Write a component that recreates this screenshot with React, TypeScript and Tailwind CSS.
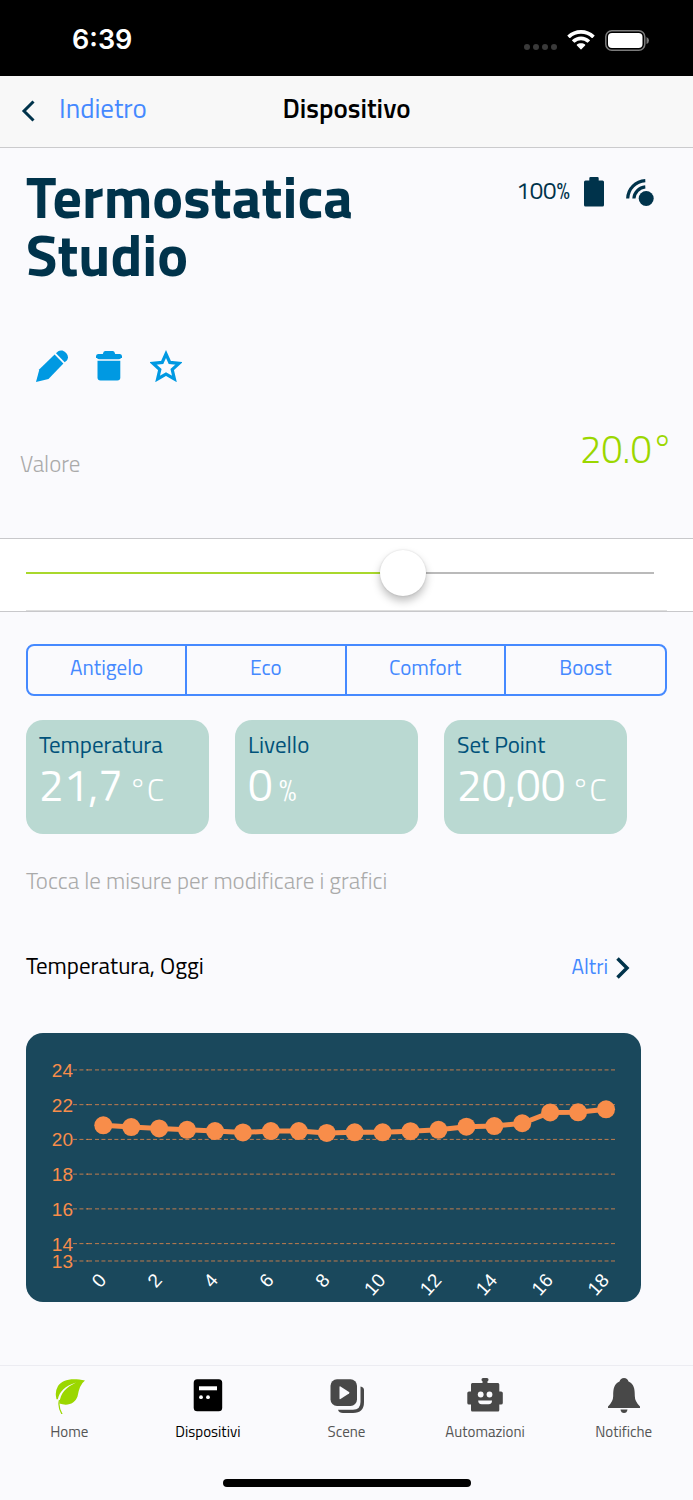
import React, { useState } from 'react';

interface Measure {
  label: string;
  value: string;
  unit: string;
}

interface Tab {
  label: string;
  color: string;
  Icon: React.FC;
}

const presets = ['Antigelo', 'Eco', 'Comfort', 'Boost'];

const measures: Measure[] = [
  { label: 'Temperatura', value: '21,7', unit: '°C' },
  { label: 'Livello', value: '0', unit: '%' },
  { label: 'Set Point', value: '20,00', unit: '°C' },
];

const readings = [
  20.81, 20.71, 20.63, 20.55, 20.48, 20.4, 20.48, 20.48, 20.37, 20.41,
  20.41, 20.47, 20.55, 20.73, 20.77, 20.93, 21.55, 21.56, 21.73,
];

const ticks = [24, 22, 20, 18, 16, 14, 13];

const WifiIcon = () => (
  <svg className="w-7 h-5" viewBox="0 0 28 20" fill="#fff" aria-hidden="true">
    <path d="M14 0C8.800 0 4.100 2 .6 5.200Q.2 5.700.6 6.100L2.400 7.900Q2.800 8.200 3.200 7.900A16 16 0 0 1 24.800 7.900Q25.200 8.200 25.600 7.900L27.400 6.100Q27.800 5.700 27.400 5.200C23.900 2 19.200 0 14 0Z" />
    <path d="M14 6.500C10.700 6.500 7.600 7.800 5.200 9.900Q4.800 10.300 5.200 10.700L7.100 12.500Q7.500 12.800 7.900 12.500A9.500 9.500 0 0 1 20.100 12.500Q20.500 12.800 20.900 12.500L22.800 10.700Q23.200 10.300 22.800 9.900C20.400 7.800 17.300 6.500 14 6.500Z" />
    <path d="M14 13.200C12.400 13.200 11 13.700 9.900 14.600Q9.500 15 9.900 15.400L13.600 19.200Q14 19.600 14.400 19.200L18.100 15.400Q18.500 15 18.100 14.600C17 13.700 15.600 13.200 14 13.200Z" />
  </svg>
);

const PhoneBatteryIcon = () => (
  <svg className="w-11 h-[21px]" viewBox="0 0 44 21" aria-hidden="true">
    <rect x=".8" y=".8" width="39" height="19.400" rx="6" fill="none" stroke="#7b7b7b" strokeWidth="1.500" />
    <rect x="3" y="3" width="34.500" height="15" rx="4" fill="#fff" />
    <path d="M41.500 7Q44 8 44 10.500T41.500 14Z" fill="#7b7b7b" />
  </svg>
);

const BatteryIcon = () => (
  <svg className="w-5 h-[30px]" viewBox="0 0 20 30" fill="#00334b" aria-hidden="true">
    <path d="M6.500 0H13.500Q14.700 0 14.700 1.200V3.400H18.500Q20 3.400 20 4.900V28Q20 29.500 18.500 29.500H1.500Q0 29.500 0 28V4.900Q0 3.400 1.500 3.400H5.300V1.200Q5.300 0 6.500 0Z" />
  </svg>
);

const SignalIcon = () => (
  <svg className="w-7 h-7" viewBox="0 0 28 28" fill="none" stroke="#00334b" strokeWidth="3.200" aria-hidden="true">
    <path d="M1.700 20.500A18.500 18.500 0 0 1 19.300 2.600" />
    <path d="M7.900 20.500A12.500 12.500 0 0 1 19.300 8.900" />
    <circle cx="20.200" cy="20.500" r="7.500" fill="#00334b" stroke="none" />
  </svg>
);

const PencilIcon = () => (
  <svg className="w-8 h-8" viewBox="0 0 32 32" fill="#0099e2" aria-hidden="true">
    <path d="M0 32L3.400 19.300L18.600 4.500L27.400 13.400L12.500 29Z" />
    <path d="M20 3.200L22.200 1.300Q24 0 26.500.6Q31.500 3 32 7.200Q31.800 9.500 30.700 10.500L28.700 12.300Z" />
  </svg>
);

const TrashIcon = () => (
  <svg className="w-[26px] h-[30px]" viewBox="0 0 26 30" fill="#0099e2" aria-hidden="true">
    <path d="M9 0H17Q18.500 0 19.200 2.900H24Q26 3.200 26 5.200V7H25Q24.500 8.300 22.500 8.300H3.500Q1.500 8.300 1 7H0V5.200Q0 3.200 2 2.900H6.800Q7.500 0 9 0Z" />
    <path d="M1.500 9.700H24.300V26.500Q24.300 29.500 21.300 29.500H4.500Q1.500 29.500 1.500 26.500Z" />
  </svg>
);

const StarIcon = () => (
  <svg className="w-8 h-8" viewBox="0 0 32 32" fill="none" stroke="#0099e2" strokeWidth="3.200" aria-hidden="true">
    <path d="M16 4L19.800 12.400L29 13.400L22.200 19.600L24.400 29L16 24.200L7.600 29L9.800 19.600L3 13.400L12.200 12.400Z" />
  </svg>
);

const LeafIcon = () => (
  <svg className="w-9 h-9" viewBox="0 0 36 36" aria-hidden="true">
    <path d="M34 2.500C21-.5 11 1.500 7 8Q3.500 14 5.500 21.200H6.800C8.500 13.500 14 8 25 4.500C15 9.500 9.500 14.500 8.300 25.500C17 28.500 24 25.500 26.500 18.500Q28.500 6.500 34 2.500Z" fill="#9bd700" />
    <path d="M8.500 22Q6.500 29 11.500 37" fill="none" stroke="#9bd700" strokeWidth="1.200" />
  </svg>
);

const DeviceIcon = () => (
  <svg className="w-9 h-9" viewBox="0 0 36 36" aria-hidden="true">
    <rect x="3.700" y="1.300" width="28.500" height="32" rx="3.500" />
    <path d="M9 8.300H27V12.300H9Z" fill="#fff" />
    <circle cx="11" cy="19.200" r="1.900" fill="#fff" />
    <circle cx="18" cy="19.200" r="1.900" fill="#fff" />
  </svg>
);

const SceneIcon = () => (
  <svg className="w-9 h-9" viewBox="0 0 36 36" fill="#484848" aria-hidden="true">
    <rect x="2.500" y="1.300" width="26.500" height="26.700" rx="6.500" />
    <path d="M11.500 9V20.500Q11.500 21.500 12.500 21L21 15.600Q22 14.800 21 14L12.500 8.500Q11.500 8 11.500 9Z" fill="#fafafd" />
    <path d="M32.500 8.500Q36 9 36 12V24Q36 35 25 35H15Q11 35 10 31.800H25Q32.500 31.800 32.500 24Z" />
  </svg>
);

const RobotIcon = () => (
  <svg className="w-9 h-9" viewBox="0 0 36 36" aria-hidden="true">
    <path d="M16 0H20Q21.500 0 21.500 1.500T20.500 3.200V5H31Q32.300 5 32.300 6.500V13.500H34Q35.800 13.500 35.800 15V25Q35.800 26.500 34 26.500H32.300V32Q32.300 33.500 31 33.500H5.300Q4 33.500 4 32V26.500H2Q.3 26.500.3 25V15Q.3 13.500 2 13.500H4V6.500Q4 5 5.300 5H15.500V3.200Q14.500 3 14.500 1.500T16 0Z" fill="#484848" />
    <circle cx="13.700" cy="16.500" r="2.900" fill="#fafafd" />
    <circle cx="22.500" cy="16.500" r="2.900" fill="#fafafd" />
    <path d="M11.200 22.500H25Q25 26.300 21.500 26.300H14.700Q11.200 26.300 11.200 22.500Z" fill="#fafafd" />
  </svg>
);

const BellIcon = () => (
  <svg className="w-9 h-9" viewBox="0 0 36 36" fill="#484848" aria-hidden="true">
    <path d="M18 0Q21.500 0 22.500 3.500C28 6 28.800 10.500 28.800 18Q28.800 23.500 34 28.500V30H2V28.500Q7.200 23.500 7.200 18C7.200 10.500 8 6 13.500 3.500Q14.500 0 18 0Z" />
    <path d="M14.500 31.500H21.500Q21 35 18 35T14.500 31.500Z" />
  </svg>
);

const tabs: Tab[] = [
  { label: 'Home', color: 'text-[#555555]', Icon: LeafIcon },
  { label: 'Dispositivi', color: 'text-black', Icon: DeviceIcon },
  { label: 'Scene', color: 'text-[#555555]', Icon: SceneIcon },
  { label: 'Automazioni', color: 'text-[#555555]', Icon: RobotIcon },
  { label: 'Notifiche', color: 'text-[#555555]', Icon: BellIcon },
];

const TemperatureChart = () => {
  const getX = (hour: number) => 77.3 + hour * 27.93;
  const getY = (value: number) => 106.4 - (value - 20) * 17.37;
  const line = readings.map((value, hour) => `${getX(hour)},${getY(value)}`).join(' ');

  return (
    <svg className="block w-full" viewBox="0 0 615 269" role="img" aria-label="Temperatura, Oggi">
      {ticks.map((tick) => (
        <g key={tick}>
          <text x="47" y={getY(tick) + 7} textAnchor="end" className="text-[19px] fill-[#f88d4a] font-['Liberation_Sans',sans-serif]">{tick}</text>
          <path d={`M47 ${getY(tick)}H62M69 ${getY(tick)}H591`} stroke="#f88d4a" strokeOpacity=".75" strokeDasharray="4 2.450" />
          <path d={`M61 ${getY(tick)}H66`} stroke="#f88d4a" strokeOpacity=".75" />
        </g>
      ))}
      <polyline points={line} fill="none" stroke="#f88d4a" strokeWidth="5" />
      {readings.map((value, hour) => (
        <circle key={hour} cx={getX(hour)} cy={getY(value)} r="9" fill="#f88d4a" />
      ))}
      {readings.map((_, hour) => hour % 2 === 0 && (
        <text
          key={hour}
          transform={`translate(${getX(hour) + 4} 248) rotate(-48)`}
          textAnchor="end"
          className="text-[19px] fill-white font-['Liberation_Sans',sans-serif]"
        >
          {hour}
        </text>
      ))}
    </svg>
  );
};

const App: React.FC = () => {
  const [target, setTarget] = useState(20);
  const min = 5;
  const max = 30;
  const stop = `calc(23px + (100% - 46px) * ${(target - min) / (max - min)})`;

  return (
    <div className="min-h-screen flex flex-col bg-[#fafafd] font-['Titillium_Web',Roboto,sans-serif]">
      {/* Status bar */}
      <div className="h-[76px] bg-black flex items-center justify-between pl-[72px] pr-11 pt-1">
        <span className="text-[27px] leading-8 font-semibold text-white font-['Inter',sans-serif]">6:39</span>
        <div className="flex items-center gap-2.5">
          <div className="flex gap-[3px] pt-3.5">
            {[0, 1, 2, 3].map((dot) => (
              <span key={dot} className="size-1.5 rounded-sm bg-[#3a3a3a]" />
            ))}
          </div>
          <WifiIcon />
          <PhoneBatteryIcon />
        </div>
      </div>

      {/* Header */}
      <header className="h-[72px] grid grid-cols-3 items-center bg-[#f8f8f8] border-b border-[#cbcbcd] px-[21px] pb-2">
        <button className="flex items-center gap-6 text-[27px] leading-8 text-[#4589ff]">
          <svg className="w-3.5 h-[22px] mt-1.5" viewBox="0 0 14 22" fill="none" stroke="#00334b" strokeWidth="3" aria-hidden="true">
            <path d="M12.500 1.500L3 11L12.500 20.500" />
          </svg>
          Indietro
        </button>
        <h1 className="text-center text-[27px] leading-8 font-semibold text-black">Dispositivo</h1>
      </header>

      <main>
        <div className="flex justify-between items-start pl-[26px] pr-[39px] pt-5">
          <h2 className="w-[340px] text-[58px] leading-[58px] font-bold text-[#00334b]">Termostatica Studio</h2>
          <div className="flex items-center pt-2 text-[24px] leading-7 text-[#00334b]">
            <span className="mr-3.5 pb-1">100%</span>
            <BatteryIcon />
            <span className="ml-[22px]"><SignalIcon /></span>
          </div>
        </div>

        <div className="flex items-center gap-7 pl-9 pt-[66px]">
          <button aria-label="Modifica"><PencilIcon /></button>
          <button aria-label="Elimina"><TrashIcon /></button>
          <button aria-label="Preferito"><StarIcon /></button>
        </div>

        <div className="flex justify-between items-end px-5 pt-[42px] pb-[60px]">
          <label htmlFor="target" className="text-[23px] leading-7 font-light text-[#aaaaaa]">Valore</label>
          <output htmlFor="target" className="pb-1 text-[38px] leading-[50px] font-light text-[#9bd700]">{target.toFixed(1)}°</output>
        </div>

        {/* Slider */}
        <div className="bg-white border-y border-[#c8c8cb]">
          <div className="h-[71px] flex items-center pl-[3px] pr-4 pb-[3px]">
            <input
              id="target"
              type="range"
              min={min}
              max={max}
              step={0.5}
              value={target}
              onChange={(e) => setTarget(Number(e.target.value))}
              className="w-full h-[46px] appearance-none bg-no-repeat bg-center bg-size-[100%_2px] [&::-webkit-slider-thumb]:appearance-none [&::-webkit-slider-thumb]:size-[46px] [&::-webkit-slider-thumb]:rounded-full [&::-webkit-slider-thumb]:bg-white [&::-webkit-slider-thumb]:shadow-[0_5px_8px_rgba(0,0,0,0.25),0_0_2px_rgba(0,0,0,0.15)]"
              style={{
                backgroundImage: `linear-gradient(to right, transparent 23px, #a9d82c 23px, #a9d82c ${stop}, #bababa ${stop}, #bababa calc(100% - 23px), transparent calc(100% - 23px))`,
              }}
            />
          </div>
          <div className="mx-[26px] h-px bg-[#dedede]" />
        </div>

        {/* Presets */}
        <div className="grid grid-cols-4 mx-[26px] mt-8 h-[52px] border-2 border-[#4589ff] rounded-lg divide-x-2 divide-[#4589ff]">
          {presets.map((preset) => (
            <button key={preset} className="pb-1.5 text-[21px] leading-7 text-[#4589ff] text-center">{preset}</button>
          ))}
        </div>

        {/* Measures */}
        <div className="grid grid-cols-3 gap-[26px] pl-[26px] pr-[66px] pt-6">
          {measures.map((measure) => (
            <button key={measure.label} className="h-[114px] px-[13px] pb-5 rounded-[17px] bg-[#bad9d2] text-left">
              <span className="block text-[23px] leading-8 text-[#00527a]">{measure.label}</span>
              <span className="flex items-baseline gap-1.5 mt-1 text-white whitespace-nowrap">
                <span className="text-[44px] leading-10">{measure.value}</span>
                <span className="text-[32px] leading-8 font-light">{measure.unit}</span>
              </span>
            </button>
          ))}
        </div>

        <p className="px-[26px] pt-[31px] text-[23px] leading-8 font-light text-[#aaaaaa]">Tocca le misure per modificare i grafici</p>

        <div className="flex justify-between items-center pl-[26px] pr-[63px] pt-[53px]">
          <h3 className="text-[23px] leading-8 text-black">Temperatura, Oggi</h3>
          <button className="flex items-center gap-2 text-[21px] leading-8 text-[#4589ff]">
            Altri
            <svg className="w-3.5 h-[22px] mt-1" viewBox="0 0 14 22" fill="none" stroke="#00334b" strokeWidth="3.500" aria-hidden="true">
              <path d="M1.500 1.500L11 11L1.500 20.500" />
            </svg>
          </button>
        </div>

        <div className="ml-[26px] mr-[52px] mt-[51px] mb-8 rounded-[17px] bg-[#1a485c]">
          <TemperatureChart />
        </div>
      </main>

      {/* Tab bar */}
      <nav className="mt-auto h-[135px] flex flex-col justify-between border-t border-[#ececf2] pt-3 pb-[13px]">
        <div className="grid grid-cols-5">
          {tabs.map(({ label, color, Icon }) => (
            <a key={label} href="#" className={`flex flex-col items-center gap-2 text-[15px] leading-5 ${color}`}>
              <Icon />
              {label}
            </a>
          ))}
        </div>
        <div className="self-center w-[248px] h-2 rounded-full bg-black" />
      </nav>
    </div>
  );
};

export default App;
